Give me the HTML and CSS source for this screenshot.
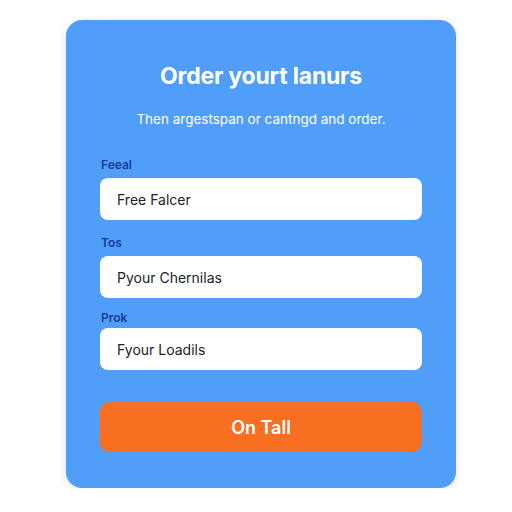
FILE: index.html
```html
<!DOCTYPE html>
<html>
<head>
<meta charset="utf-8">
<link rel="stylesheet" href="styles.css">
</head>
<body>
<div class="card">
  <h1 class="title">Order yourt lanurs</h1>
  <p class="subtitle">Then argestspan or cantngd and order.</p>
  <div class="field f1">
    <label class="label">Feeal</label>
    <div class="input">Free Falcer</div>
  </div>
  <div class="field f2">
    <label class="label">Tos</label>
    <div class="input">Pyour Chernilas</div>
  </div>
  <div class="field f3">
    <label class="label">Prok</label>
    <div class="input">Fyour Loadils</div>
  </div>
  <button class="btn">On Tall</button>
</div>
</body>
</html>
```
FILE: styles.css
```css
html, body {
  margin: 0;
  padding: 0;
  background: #ffffff;
}
body {
  padding-top: 20px;
  font-family: Inter, "Noto Sans", sans-serif;
}
.card {
  margin-left: 66px;
  width: 390px;
  height: 468px;
  box-sizing: border-box;
  background: #519ef8;
  border-radius: 16px;
  box-shadow: 0 2px 10px rgba(0,0,0,0.12);
  padding: 42px 34px 0 34px;
  display: flex;
  flex-direction: column;
}
.title {
  margin: 0;
  text-align: center;
  color: #fff;
  font-size: 23px;
  line-height: 28px;
  font-weight: 700;
  letter-spacing: -0.2px;
}
.subtitle {
  margin: 20px 0 0 0;
  text-align: center;
  color: #fff;
  font-size: 13.5px;
  line-height: 18px;
}
.field {
  display: flex;
  flex-direction: column;
}
.f1 { margin-top: 29px; }
.f2 { margin-top: 15px; }
.f3 { margin-top: 12px; }
.label {
  color: #143c9a;
  font-size: 12px;
  line-height: 16px;
  font-weight: 600;
  margin-left: 1px;
}
.f1 .label, .f2 .label { margin-bottom: 5px; }
.f3 .label { margin-bottom: 2px; }
.input {
  height: 42px;
  background: #fff;
  border-radius: 8px;
  display: flex;
  align-items: center;
  padding-left: 17px;
  font-size: 14px;
  color: #222;
}
.btn {
  margin-top: 32px;
  height: 50px;
  border: none;
  border-radius: 10px;
  background: #f86f22;
  color: #fff;
  font-family: Inter, "Noto Sans", sans-serif;
  font-size: 18px;
  font-weight: 600;
}
```
